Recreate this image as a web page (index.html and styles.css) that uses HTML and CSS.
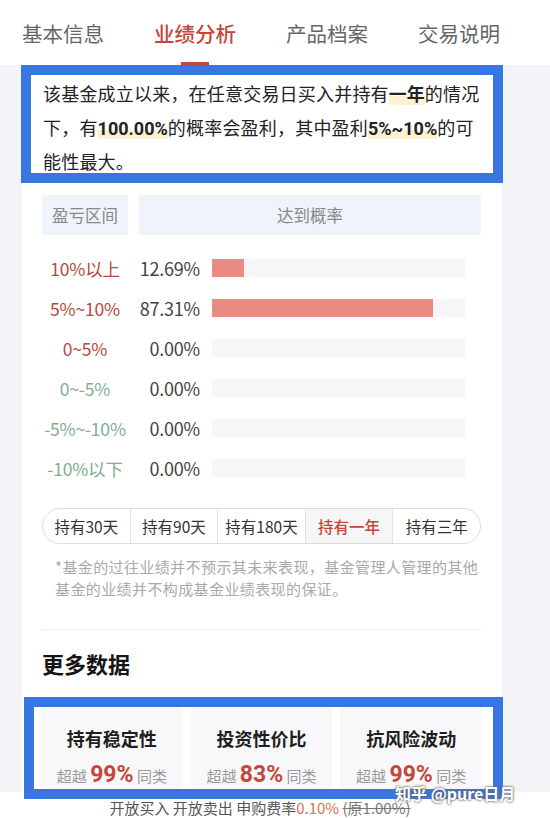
FILE: index.html
```html
<!DOCTYPE html>
<html lang="zh">
<head>
<meta charset="utf-8">
<link rel="stylesheet" href="styles.css">
</head>
<body>
<div class="tabs">
  <div class="tab">基本信息</div>
  <div class="tab active">业绩分析</div>
  <div class="tab">产品档案</div>
  <div class="tab">交易说明</div>
</div>
<main class="card">
  <div class="summary">该基金成立以来，在任意交易日买入并持有<b class="hl">一年</b>的情况下，有<b class="hl">100.00%</b>的概率会盈利，其中盈利<b class="hl">5%~10%</b>的可能性最大。</div>

  <div class="thead">
    <div class="th">盈亏区间</div>
    <div class="th">达到概率</div>
  </div>
  <div class="rows">
    <div class="row"><span class="lbl up">10%以上</span><span class="val">12.69%</span><div class="track"><div class="fill" style="width:12.69%"></div></div></div>
    <div class="row"><span class="lbl up">5%~10%</span><span class="val">87.31%</span><div class="track"><div class="fill" style="width:87.31%"></div></div></div>
    <div class="row"><span class="lbl up">0~5%</span><span class="val">0.00%</span><div class="track"></div></div>
    <div class="row"><span class="lbl down">0~-5%</span><span class="val">0.00%</span><div class="track"></div></div>
    <div class="row"><span class="lbl down">-5%~-10%</span><span class="val">0.00%</span><div class="track"></div></div>
    <div class="row"><span class="lbl down">-10%以下</span><span class="val">0.00%</span><div class="track"></div></div>
  </div>

  <div class="seg">
    <div class="seg-item">持有30天</div>
    <div class="seg-item">持有90天</div>
    <div class="seg-item">持有180天</div>
    <div class="seg-item active">持有一年</div>
    <div class="seg-item">持有三年</div>
  </div>

  <p class="note">*基金的过往业绩并不预示其未来表现，基金管理人管理的其他基金的业绩并不构成基金业绩表现的保证。</p>

  <div class="divider"></div>
  <h2 class="more">更多数据</h2>

  <div class="metrics">
    <div class="metric">
      <div class="m-title">持有稳定性</div>
      <div class="m-sub">超越 <b>99%</b> 同类</div>
    </div>
    <div class="metric">
      <div class="m-title">投资性价比</div>
      <div class="m-sub">超越 <b>83%</b> 同类</div>
    </div>
    <div class="metric">
      <div class="m-title">抗风险波动</div>
      <div class="m-sub">超越 <b>99%</b> 同类</div>
    </div>
  </div>
</main>
<footer class="bottom">开放买入 开放卖出 申购费率<span class="rate">0.10%</span> <span class="orig">(原1.00%)</span></footer>
<div class="watermark">知乎 @pure日月</div>
</body>
</html>
```
FILE: styles.css
```css
* { box-sizing: border-box; }
html, body { margin: 0; padding: 0; }
body {
  width: 550px;
  height: 818px;
  overflow: hidden;
  background: #f3f4f8;
  font-family: "Noto Sans CJK SC", "Noto Sans", sans-serif;
  color: #222;
  position: relative;
}
.tabs {
  height: 65px;
  background: #fff;
  display: flex;
  gap: 50px;
  align-items: center;
  padding: 0 0 0 22px;
}
.tab {
  font-size: 20.5px;
  color: #666;
  line-height: 30px;
  position: relative;
  margin-top: 1px;
}
.tab.active { color: #c4453a; font-weight: 500; }
.tab.active::after {
  content: "";
  position: absolute;
  left: 50%;
  margin-left: -14px;
  width: 28px;
  height: 4px;
  bottom: -18px;
  background: #c4453a;
}
.card {
  width: 480px;
  margin-left: 22px;
  background: #fff;
  display: flex;
  flex-direction: column;
}
.summary {
  border: 10px solid #3a76e2;
  margin-left: -1px;
  margin-right: -1px;
  height: 118px;
  padding: 2px 4px 0 12px;
  font-size: 18px;
  letter-spacing: 0.2px;
  line-height: 32px;
  color: #222;
}
.hl {
  font-family: "Roboto", "Noto Sans CJK SC", sans-serif;
  font-weight: 700;
  letter-spacing: 0;
  background: linear-gradient(transparent 55%, #fcf1d2 55%);
}
.thead {
  margin: 12px 21px 0 20px;
  height: 40px;
  display: grid;
  grid-template-columns: 86px 1fr;
  gap: 11px;
}
.th {
  background: #eff3fa;
  display: flex;
  align-items: center;
  justify-content: center;
  color: #888;
  font-size: 16.5px;
}
.rows {
  margin: 13px 0 0 20px;
  display: flex;
  flex-direction: column;
}
.row {
  height: 40px;
  display: grid;
  grid-template-columns: 86px 72px 265px;
  align-items: center;
}
.lbl {
  text-align: center;
  font-size: 17.5px;
  letter-spacing: -0.2px;
}
.lbl.up { color: #b9473d; }
.lbl.down { color: #7fae8f; }
.val {
  text-align: right;
  font-size: 18px;
  color: #444;
  letter-spacing: -0.2px;
}
.track {
  margin-left: 12px;
  height: 18px;
  background: #f6f6f9;
}
.fill {
  height: 100%;
  background: #e98b83;
}
.seg {
  margin: 20px 21px 0 20px;
  height: 36px;
  border: 1px solid #dcdcdc;
  border-radius: 18px;
  display: flex;
  overflow: hidden;
}
.seg-item {
  flex: 1;
  display: flex;
  align-items: center;
  justify-content: center;
  font-size: 15.5px;
  color: #333;
  border-left: 1px solid #e3e3e3;
}
.seg-item:first-child { border-left: none; }
.seg-item.active { color: #c4453a; background: #f6f6f6; font-weight: 500; }
.note {
  margin: 12px 21px 0 33px;
  font-size: 15px;
  letter-spacing: 0.4px;
  line-height: 22px;
  color: #a9a9a9;
}
.divider {
  margin: 29px 21px 0 20px;
  height: 1px;
  background: #eeeeee;
}
.more {
  margin: 18px 0 0 20px;
  font-size: 22px;
  line-height: 30px;
  font-weight: 700;
  color: #151515;
}
.metrics {
  position: relative;
  z-index: 1;
  margin: 19px -1px 0 2px;
  border: 10px solid #3a76e2;
  height: 102px;
  padding: 0 11px 0 7px;
  display: grid;
  grid-template-columns: repeat(3, 1fr);
  gap: 8px;
  overflow: hidden;
  background: #fff;
}
.metric {
  background: #f8f8fa;
  display: flex;
  flex-direction: column;
  align-items: center;
  padding-top: 17px;
}
.m-title {
  font-size: 18px;
  line-height: 28px;
  font-weight: 700;
  color: #1e1e1e;
}
.m-sub {
  margin-top: 8px;
  font-size: 15px;
  line-height: 30px;
  color: #999;
}
.m-sub b {
  font-family: "Roboto", sans-serif;
  font-size: 23px;
  font-weight: 700;
  color: #c5473c;
}
.bottom {
  margin-top: -7px;
  height: 40px;
  background: #fff;
  text-align: center;
  padding: 5px 30px 0 0;
  font-size: 15px;
  line-height: 22px;
  color: #555;
}
.rate { color: #e0704f; }
.orig { color: #777; text-decoration: line-through; }
.watermark {
  position: absolute;
  z-index: 2;
  left: 395px;
  top: 781px;
  font-size: 16px;
  font-weight: 700;
  color: #fff;
  text-shadow: 0 0 2px #555, 0 0 3px #777;
}
```
